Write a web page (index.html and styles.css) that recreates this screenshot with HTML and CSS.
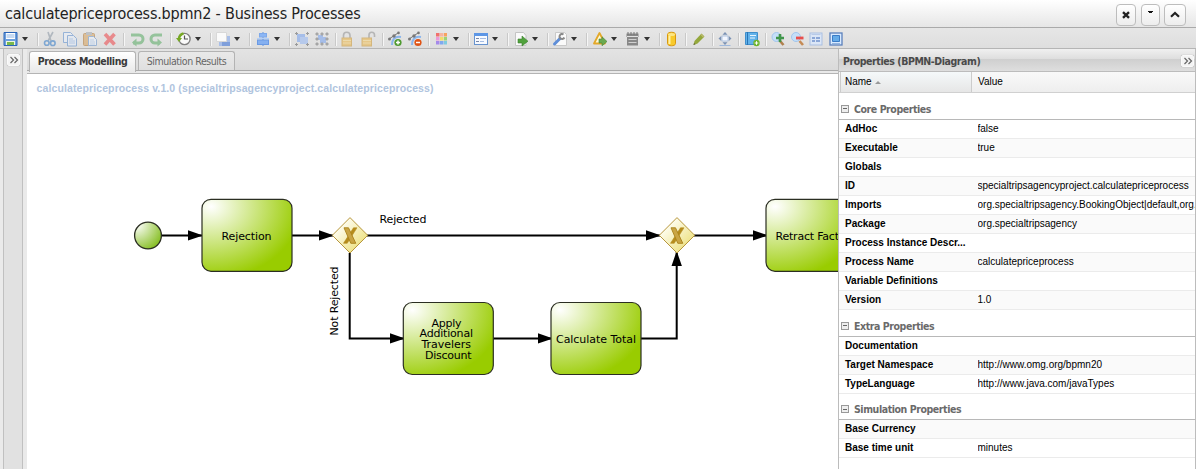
FILE: index.html
```
<!DOCTYPE html>
<html lang="en">
<head>
<meta charset="utf-8">
<title>Business Processes</title>
<link rel="stylesheet" href="styles.css">
</head>
<body>
<header class="titlebar">
  <h1 class="title">calculatepriceprocess.bpmn2 - Business Processes</h1>
  <div class="window-buttons">
    <button class="wbtn wbtn-close"><svg width="18" height="20" viewBox="0 0 18 20"><path d="M6 7.2l6 5.6M12 7.2l-6 5.6" stroke="#222" stroke-width="2.4"/></svg></button>
    <button class="wbtn wbtn-menu"><svg width="17" height="20" viewBox="0 0 17 20"><path d="M6 6h5v1h-1v1H7V7H6z" fill="#111"/></svg></button>
    <button class="wbtn wbtn-up"><svg width="20" height="20" viewBox="0 0 20 20"><path d="M6 11.8l4-3.8 4 3.8" fill="none" stroke="#222" stroke-width="2.2"/></svg></button>
  </div>
</header>

<nav class="toolbar">
  <span class="tool menu"><svg viewBox="0 0 16 16"><path d="M1 1.5h13v13H1z" fill="#6d9fdd" stroke="#2b65b8"/><path d="M3 2h9v6H3z" fill="#fff"/><path d="M3.5 4h8M3.5 6h8" stroke="#8db4e4"/><path d="M3 10h9v4H3z" fill="#eef8dd"/><path d="M4 11h7v3H4z" fill="#79b84b"/></svg></span>
  <i class="sep"></i>
  <span class="tool off"><svg viewBox="0 0 16 16"><path d="M6 1l3 9M11 1L6 10" stroke="#7f8d9c" stroke-width="1.6"/><circle cx="4.8" cy="12" r="2.3" fill="none" stroke="#1f6fc5" stroke-width="1.6"/><circle cx="10.8" cy="12.2" r="2.3" fill="none" stroke="#1f6fc5" stroke-width="1.6"/></svg></span>
  <span class="tool off"><svg viewBox="0 0 16 16"><path d="M1.5 1.5h7l2 2v8h-9z" fill="#e9f1fc" stroke="#4b83cc"/><path d="M5.5 4.500h6l3 3v7.500h-9z" fill="#e3edfb" stroke="#4b83cc"/><path d="M7 8h4M7 10h6M7 12h6" stroke="#88b0e6"/></svg></span>
  <span class="tool off"><svg viewBox="0 0 16 16"><rect x="1.500" y="2.500" width="11" height="12" rx="1" fill="#d69a4c" stroke="#a8691f"/><path d="M4 1h6v3H4z" fill="#9aa0a8"/><path d="M6.500 5.500h5l3 3v6h-8z" fill="#eef4fd" stroke="#5b8ccc"/><path d="M8 9h4M8 11h5M8 13h5" stroke="#9dbfe9"/></svg></span>
  <span class="tool off"><svg viewBox="0 0 16 16"><path d="M3 3l9.500 10.500M12.500 3L3 13.500" stroke="#ee3438" stroke-width="3.600"/></svg></span>
  <i class="sep"></i>
  <span class="tool off"><svg viewBox="0 0 16 16"><path d="M2 4h8a3.700 3.700 0 010 8H4" fill="none" stroke="#4aa557" stroke-width="3"/><path d="M7.500 7.500L3 11.500l4.500 4z" fill="#4aa557"/></svg></span>
  <span class="tool off"><svg viewBox="0 0 16 16"><path d="M13 4H6a3.700 3.700 0 000 8h5" fill="none" stroke="#4aa557" stroke-width="3"/><path d="M8.500 7.500l4.500 4-4.500 4z" fill="#4aa557"/></svg></span>
  <i class="sep"></i>
  <span class="tool menu"><svg viewBox="0 0 16 16"><circle cx="8.500" cy="8" r="5.600" fill="#fafafa" stroke="#808080" stroke-width="1.400"/><path d="M8.500 4.500V8H12" fill="none" stroke="#555" stroke-width="1.200"/><path d="M7.500 2.500a6 6 0 00-4.500 5" fill="none" stroke="#77a825" stroke-width="2.400"/><path d="M0 7h6l-3 4z" fill="#77a825"/></svg></span>
  <i class="sep"></i>
  <span class="tool menu"><svg viewBox="0 0 16 16"><path d="M4 5h11v10H4z" fill="#a9bfe8"/><path d="M7 11h8v4H7z" fill="#7f9fdb"/><path d="M1.500 1.500h10v9h-10z" fill="#fafafa" stroke="#d8d8d8"/></svg></span>
  <i class="sep"></i>
  <span class="tool menu"><svg viewBox="0 0 16 16"><path d="M8 1v14" stroke="#5c90dc"/><rect x="4.500" y="2.500" width="7" height="3.500" fill="#8bb6f5" stroke="#7ea9ea"/><rect x="2.500" y="9" width="11" height="4.500" fill="#85b0f0" stroke="#6b9ae4"/><path d="M2 7.500h12" stroke="#b5d0f6"/></svg></span>
  <i class="sep"></i>
  <span class="tool off"><svg viewBox="0 0 16 16"><path d="M3 3h8v8H3z" fill="#6a9af0"/><path d="M6 6h8v7H6z" fill="#8db3f6"/><path d="M1 2.500h3M2.500 1v3M12 2.500h3M13.500 1v3M1 13.500h3M2.500 12v3M12 13.500h3M13.500 12v3" stroke="#555"/></svg></span>
  <span class="tool off"><svg viewBox="0 0 16 16"><path d="M4 4h5v2h3v6H6v-3H4z" fill="#6a9af0"/><g fill="#777" stroke="#555" stroke-width=".5"><circle cx="3" cy="3" r="1.300"/><circle cx="8" cy="3" r="1.300"/><circle cx="13" cy="3" r="1.300"/><circle cx="3" cy="8" r="1.300"/><circle cx="13" cy="8" r="1.300"/><circle cx="3" cy="13" r="1.300"/><circle cx="8" cy="13" r="1.300"/><circle cx="13" cy="13" r="1.300"/></g></svg></span>
  <i class="sep"></i>
  <span class="tool off"><svg viewBox="0 0 16 16"><path d="M2.500 8V4.500a3 3 0 016.500 0V8" fill="none" stroke="#888" stroke-width="1.600"/><rect x="1" y="7" width="9.500" height="8" fill="#edb034" stroke="#c98e1c"/><path d="M2 9.500h8M2 12h8" stroke="#f8d478"/></svg></span>
  <span class="tool off"><svg viewBox="0 0 16 16"><path d="M8 8V4a2.700 2.700 0 015.500 0v2" fill="none" stroke="#888" stroke-width="1.600"/><rect x="1" y="7" width="9.500" height="8" fill="#edb034" stroke="#c98e1c"/><path d="M2 9.500h8M2 12h8" stroke="#f8d478"/></svg></span>
  <i class="sep"></i>
  <span class="tool"><svg viewBox="0 0 16 16"><path d="M2 8L11 2" stroke="#777"/><path d="M5 14c0-5 2-9 9-8" fill="none" stroke="#8bb5ec" stroke-width="2"/><g fill="#777"><circle cx="2.500" cy="8" r="1.500"/><circle cx="7" cy="5" r="1.700"/><circle cx="11.500" cy="1.900" r="1.300"/></g><circle cx="11" cy="11.500" r="3.600" fill="#4f9a31"/><path d="M11 9.500v4M9 11.500h4" stroke="#fff" stroke-width="1.500"/></svg></span>
  <span class="tool"><svg viewBox="0 0 16 16"><path d="M2 8L11 2" stroke="#777"/><path d="M5 14c0-5 2-9 9-8" fill="none" stroke="#8bb5ec" stroke-width="2"/><g fill="#777"><circle cx="2.500" cy="8" r="1.500"/><circle cx="7" cy="5" r="1.700"/><circle cx="11.500" cy="1.900" r="1.300"/></g><circle cx="11" cy="11.500" r="3.600" fill="#df5315"/><path d="M9 11.500h4" stroke="#fff" stroke-width="1.500"/></svg></span>
  <i class="sep"></i>
  <span class="tool menu"><svg viewBox="0 0 16 16"><path d="M2 2h3.500v3.500H2z" fill="#f1716d"/><path d="M6 2h3.500v3.500H6z" fill="#f6b5a0"/><path d="M10 2h3v3.500h-3z" fill="#f7a25f"/><path d="M2 6h3.500v3.500H2z" fill="#eb9ad8"/><path d="M6 6h3.500v3.500H6z" fill="#f0dc6a"/><path d="M10 6h3v3.500h-3z" fill="#9bd477"/><path d="M2 10h3.500v3.500H2z" fill="#a58aea"/><path d="M6 10h3.500v3.500H6z" fill="#7fa9f0"/><path d="M10 10h3v3.500h-3z" fill="#7fcbe0"/></svg></span>
  <i class="sep"></i>
  <span class="tool menu"><svg viewBox="0 0 16 16"><rect x="1.500" y="2.500" width="13" height="11" fill="#f7faff" stroke="#6793cf"/><path d="M1 2h14v3H1z" fill="#5c96e6"/><path d="M3 7.500h3M3 10.500h3" stroke="#7887a8"/><path d="M7 7.500h6M7 10.500h4" stroke="#a6bde3"/></svg></span>
  <i class="sep"></i>
  <span class="tool menu"><svg viewBox="0 0 16 16"><path d="M2.500 1.500h8l2.500 3v10H2.500z" fill="#fafafa" stroke="#c4c4c4"/><path d="M5 8h4V5l6 5.200-6 4.800v-3H5z" fill="#51a23d" stroke="#3d8130" stroke-width=".6"/></svg></span>
  <i class="sep"></i>
  <span class="tool menu"><svg viewBox="0 0 16 16"><path d="M3.500 1.500h9l2 2v11h-11z" fill="#fafafa" stroke="#c9c9c9"/><path d="M2.500 13L8 7.500" stroke="#5f8ed8" stroke-width="3" stroke-linecap="round"/><path d="M11.500 3.500a2.500 2.500 0 10.800 3" fill="none" stroke="#888" stroke-width="2"/></svg></span>
  <i class="sep"></i>
  <span class="tool menu"><svg viewBox="0 0 16 16"><path d="M7.500 2L13 12.500H2z" fill="#fff8d5" stroke="#e3a829" stroke-width="1.800" stroke-linejoin="round"/><path d="M7 8h3V5.800l5 4.700-5 4.300V12H7z" fill="#6aaa50" stroke="#498535" stroke-width=".6"/></svg></span>
  <span class="tool menu"><svg viewBox="0 0 16 16"><path d="M1.500 2.500h12v3.500h-12zM2 6h11v8.500H2z" fill="#888"/><path d="M3 1v3M6 1v3M9 1v3M12 1v3" stroke="#777"/><path d="M2 5.500h11" stroke="#e2e2e2"/><path d="M3.500 8.500h8M3.500 11.500h8" stroke="#d0d0d0"/></svg></span>
  <i class="sep"></i>
  <span class="tool"><svg viewBox="0 0 16 16"><path d="M3.500 3.500c0-3 8-3 8 0v9c0 3-8 3-8 0z" fill="#f8ca2c" stroke="#d9980f"/><path d="M5.500 5v8" stroke="#fff0a5" stroke-width="2"/><ellipse cx="7.500" cy="3.500" rx="3.500" ry="1.500" fill="#fde684"/></svg></span>
  <i class="sep"></i>
  <span class="tool"><svg viewBox="0 0 16 16"><path d="M2.500 14l1-4L10.500 2.500 13.500 5.500 6.500 12.500z" fill="#94a83c"/><path d="M10 3.500L12.500 6" stroke="#bcb96e" stroke-width="1.500"/><path d="M2.500 14l.5-2 1.500 1.300z" fill="#5f6338"/></svg></span>
  <i class="sep"></i>
  <span class="tool"><svg viewBox="0 0 16 16"><rect x="5" y="5" width="6" height="5" fill="#f3f7ff" stroke="#b0c4e0"/><path d="M8 1l2.500 2.700h-5zM8 14l2.500-2.700h-5zM1.500 7.500l2.700-2.500v5zM14.500 7.500L11.800 5v5z" fill="#7b92b5"/><path d="M2.500 14.500h11" stroke="#9fb9dd"/></svg></span>
  <i class="sep"></i>
  <span class="tool"><svg viewBox="0 0 16 16"><path d="M1.500 1.500h12v12h-12z" fill="#62b2ea" stroke="#3f8ecb"/><path d="M3.500 1v13" stroke="#2874b5"/><path d="M6 4.500h6M6 7h5" stroke="#e6f5ff"/><circle cx="12.500" cy="12" r="3.200" fill="#6fb52d"/><path d="M12.500 10.200v3.600M10.700 12h3.600" stroke="#fff"/></svg></span>
  <i class="sep"></i>
  <span class="tool"><svg viewBox="0 0 16 16"><path d="M9 10l3.500 4" stroke="#b0804e" stroke-width="2.600"/><circle cx="5.500" cy="6" r="4.500" fill="#c5dff8" stroke="#a3c5ec"/><path d="M9 3v8M5 7h8" stroke="#41964a" stroke-width="2.600"/></svg></span>
  <span class="tool"><svg viewBox="0 0 16 16"><path d="M8.500 10l3.500 4" stroke="#c58b55" stroke-width="2.600"/><circle cx="5" cy="6" r="4.500" fill="#c5dff8" stroke="#a3c5ec"/><path d="M5 7h7.500" stroke="#e84f4c" stroke-width="2.800"/></svg></span>
  <span class="tool"><svg class="nudge" viewBox="0 0 16 16"><rect x="2" y="2" width="12" height="12" fill="#dbe6f6" stroke="#a9bfe2"/><path d="M3.500 3.500h9" stroke="#b8cae8"/><path d="M4 6h3v2H4zM8 6h4v2H8zM4 9h3v2H4zM8 9h4v2H8z" fill="#8ba7d7"/></svg></span>
  <span class="tool"><svg class="nudge" viewBox="0 0 16 16"><rect x="2" y="2" width="12" height="12" fill="#d9eaff" stroke="#5b80bc" stroke-width="1.300"/><path d="M4.500 4.500h7v6h-7z" fill="#65abe8" stroke="#3b7cc6"/><path d="M4 12.500h8" stroke="#92b5e0"/></svg></span>
</nav>

<main class="workspace">
  <aside class="rail">
    <button class="collapse"><svg width="12" height="12" viewBox="0 0 12 12"><path d="M2.500 3l3 3-3 3M6.500 3l3 3-3 3" fill="none" stroke="#666" stroke-width="1.200"/></svg></button>
  </aside>
  <section class="editor">
    <div class="tabs">
      <span class="tab tab-active">Process Modelling</span>
      <span class="tab">Simulation Results</span>
    </div>
    <div class="canvas">
      <svg class="diagram" width="811" height="395" viewBox="27 74 811 395">
        <defs>
          <radialGradient id="task" cx="10%" cy="10%" r="100%" fx="10%" fy="10%"><stop offset="0" stop-color="#fff"/><stop offset="1" stop-color="#9c0"/></radialGradient>
          <radialGradient id="start" cx="10%" cy="10%" r="100%" fx="10%" fy="10%"><stop offset="0" stop-color="#fff"/><stop offset="1" stop-color="#8bc12c"/></radialGradient>
          <linearGradient id="gate" x1="0" y1="0" x2="1" y2="1"><stop offset=".2" stop-color="#fffef4"/><stop offset=".85" stop-color="#ece07d"/></linearGradient>
          <marker id="arrow" markerUnits="userSpaceOnUse" markerWidth="15" markerHeight="11" refX="14" refY="5.500" orient="auto"><path d="M0 .3L15 5.500 0 10.700z"/></marker>
          <g id="xgate">
            <path d="M0-17.700L17.700 0 0 17.700-17.700 0z" fill="url(#gate)" stroke="#b7963c"/>
            <path d="M3.500-7.500H7L-2.800 8H-6.500z" fill="#b58c1c" stroke="#b58c1c" stroke-width=".6"/>
            <path d="M-6-7.500h4.500L5.800 8H.8z" fill="#c9a544" stroke="#a98119" stroke-width=".9"/>
          </g>
          <rect id="box" width="90" height="72" rx="9" fill="url(#task)" stroke="#2b2e22" stroke-width="1.200"/>
        </defs>
        <text class="caption" x="36.500" y="92" textLength="397">calculatepriceprocess v.1.0 (specialtripsagencyproject.calculatepriceprocess)</text>
        <g class="flow">
          <path d="M162 235.400H202"/><path d="M292 235.400H333"/><path d="M367 235.400H660"/>
          <path d="M349.700 253V338.400H404"/><path d="M493 338.400H552"/>
          <path d="M641 338.400H676.700V252"/><path d="M694 235.400H767"/>
        </g>
        <circle cx="148" cy="235.500" r="13.400" fill="url(#start)" stroke="#2b2e22" stroke-width="1.300"/>
        <use href="#box" x="202" y="199.300"/><use href="#box" x="403.300" y="302.500"/>
        <use href="#box" x="551" y="302.500"/><use href="#box" x="766" y="199.300"/>
        <use href="#xgate" x="350" y="235.300"/><use href="#xgate" x="677" y="235.300"/>
        <g class="label">
          <text x="221.500" y="240" textLength="50">Rejection</text>
          <text x="379.500" y="223" textLength="47">Rejected</text>
          <text transform="translate(337.500 335.500) rotate(-90)" textLength="69">Not Rejected</text>
          <text x="431.500" y="327" textLength="30">Apply</text>
          <text x="419.500" y="337" textLength="53.500">Additional</text>
          <text x="421.500" y="348" textLength="49.500">Travelers</text>
          <text x="425" y="359" textLength="46.500">Discount</text>
          <text x="556" y="343" textLength="80">Calculate Total</text>
          <text x="775.500" y="240" textLength="69">Retract Facts</text>
        </g>
      </svg>
    </div>
  </section>
  <aside class="props">
    <div class="props-title"><span class="props-name">Properties (BPMN-Diagram)</span>
      <button class="collapse"><svg width="12" height="12" viewBox="0 0 12 12"><path d="M2.500 3l3 3-3 3M6.500 3l3 3-3 3" fill="none" stroke="#666" stroke-width="1.200"/></svg></button>
    </div>
    <div class="cols"><span class="col-name">Name <i class="sort"></i></span><span class="col-value">Value</span></div>
    <div class="group"><i class="toggle"></i><span>Core Properties</span></div>
    <div class="row"><b>AdHoc</b><span>false</span></div>
    <div class="row alt"><b>Executable</b><span>true</span></div>
    <div class="row"><b>Globals</b><span></span></div>
    <div class="row alt"><b>ID</b><span>specialtripsagencyproject.calculatepriceprocess</span></div>
    <div class="row"><b>Imports</b><span>org.specialtripsagency.BookingObject|default,org.specialtripsagency</span></div>
    <div class="row alt"><b>Package</b><span>org.specialtripsagency</span></div>
    <div class="row"><b>Process Instance Descr...</b><span></span></div>
    <div class="row alt"><b>Process Name</b><span>calculatepriceprocess</span></div>
    <div class="row"><b>Variable Definitions</b><span></span></div>
    <div class="row alt"><b>Version</b><span>1.0</span></div>
    <div class="group"><i class="toggle"></i><span>Extra Properties</span></div>
    <div class="row"><b>Documentation</b><span></span></div>
    <div class="row alt"><b>Target Namespace</b><span>http://www.omg.org/bpmn20</span></div>
    <div class="row"><b>TypeLanguage</b><span>http://www.java.com/javaTypes</span></div>
    <div class="group group-short"><i class="toggle"></i><span>Simulation Properties</span></div>
    <div class="row alt"><b>Base Currency</b><span></span></div>
    <div class="row"><b>Base time unit</b><span>minutes</span></div>
  </aside>
</main>
</body>
</html>
```
FILE: styles.css
```
* { box-sizing: border-box; }
body {
  margin: 0;
  width: 1196px;
  height: 469px;
  overflow: hidden;
  display: flex;
  flex-direction: column;
  background: #eaeaea;
  font-family: "Liberation Sans", Arial, sans-serif;
  font-size: 11px;
}
button { padding: 0; font: inherit; }
svg { display: block; }

.titlebar {
  height: 28px;
  flex: none;
  display: flex;
  justify-content: space-between;
  padding: 0 10px 0 5px;
  background: linear-gradient(#fff, #e6e6e6);
  border-bottom: 1px solid #aaa;
}
.title {
  margin: 0;
  font: 400 16px/28px "DejaVu Sans Condensed", "DejaVu Sans", sans-serif;
  font-stretch: condensed;
  letter-spacing: -0.19px;
  color: #222;
  white-space: nowrap;
}
.window-buttons { display: flex; padding-top: 4px; }
.wbtn {
  height: 22px;
  border: 1px solid #bdbdbd;
  border-radius: 4px;
  background: linear-gradient(#fff, #ededed);
}
.wbtn-close { width: 20px; }
.wbtn-menu { width: 19px; margin: 0 4px 0 5px; }
.wbtn-up { width: 22px; }

.toolbar {
  height: 21px;
  flex: none;
  display: flex;
  align-items: center;
  padding: 2px 0 0 1px;
  background: linear-gradient(#e6e6e6, #dedede);
  border-bottom: 1px solid #b5b5b5;
}
.tool { width: 20px; height: 16px; padding-left: 2px; flex: none; }
.tool svg { width: 16px; height: 16px; }
.tool .nudge { margin-left: -3px; }
.off svg { opacity: .5; }
.menu { width: 32.9px; display: flex; align-items: center; }
.menu::after {
  content: "";
  margin-left: 3px;
  border: 3px solid transparent;
  border-top: 4px solid #333;
  border-bottom: 0;
}
.sep { width: 1px; height: 13px; flex: none; margin: 0 2.6px 0 3px; background: #c9c9c9; box-shadow: 1px 0 #f6f6f6; }

.workspace { flex: 1; display: flex; min-height: 0; }
.rail {
  width: 20px;
  flex: none;
  margin: 0 4px 0 3px;
  padding: 5px 0 0 3px;
  background: #e1e1e1;
  border: solid #c0c0c0;
  border-width: 0 1px;
}
.collapse {
  display: grid;
  place-content: center;
  width: 13px;
  height: 12px;
  border: 1px solid #fafafa;
  border-radius: 2px;
  background: #f4f4f4;
  box-shadow: 0 0 1px #999;
}
.editor { flex: 1; min-width: 0; display: flex; flex-direction: column; }
.tabs {
  height: 25px;
  flex: none;
  display: flex;
  align-items: flex-start;
  gap: 2px;
  padding: 2px 0 0 2px;
  background: linear-gradient(#e3e3e3 0 1px, #dadada 21px, #ababab 21px 22px, #e9e9e9 22px 24px, #b4b4b4 24px);
}
.tab {
  width: 97px;
  height: 19px;
  border: 1px solid #b3b3b3;
  border-bottom: 0;
  border-radius: 3px 3px 0 0;
  background: linear-gradient(#e9e9e9, #dfdfdf);
  font: 10.5px/18px "DejaVu Sans Condensed", "DejaVu Sans", sans-serif;
  font-stretch: condensed;
  letter-spacing: -0.43px;
  text-align: center;
  color: #666;
  white-space: nowrap;
}
.tab-active { width: 107px; height: 21px; background: linear-gradient(#fff, #e9e9e9); color: #3a3a3a; font-weight: 700; }
.canvas { flex: 1; min-height: 0; background: #fff; }
.flow path { fill: none; stroke: #000; stroke-width: 2; marker-end: url(#arrow); }
.label { font: 11px "DejaVu Sans", sans-serif; }
.caption { font: bold 10.5px "Liberation Sans", Arial, sans-serif; fill: #b0c4de; }

.props {
  width: 358px;
  flex: none;
  overflow: hidden;
  background: #fff;
  border: solid #bcbcbc;
  border-width: 0 1px;
}
.props-title, .group {
  font: bold 10.5px/20px "DejaVu Sans Condensed", "DejaVu Sans", sans-serif;
  font-stretch: condensed;
  letter-spacing: -0.43px;
}
.props-title {
  height: 23px;
  display: flex;
  justify-content: space-between;
  align-items: center;
  padding: 1px 1px 0 4px;
  color: #4a4a4a;
  background: linear-gradient(#f0f0f0, #dedede 45%, #cfcfcf 46%, #dedede);
  border-bottom: 1px solid #bcbcbc;
}
.cols {
  height: 21px;
  display: flex;
  line-height: 20px;
  padding-left: 1px;
  background: linear-gradient(#f9f9f9, #eee);
  border-bottom: 1px solid #d0d0d0;
}
.col-name { width: 132px; padding-left: 4px; background: linear-gradient(#f5f9fa, #e6e6e6); border: solid #ccc; border-width: 0 1px; font-size: 10px; }
.col-value { padding-left: 6px; font-size: 10px; }
.sort { display: inline-block; margin: 0 0 1px 1px; border: 3px solid transparent; border-bottom-color: #999; border-top: 0; }
.group {
  height: 27px;
  display: flex;
  align-items: center;
  gap: 5px;
  padding: 5px 0 0 2px;
  color: #6a6a6a;
  border-bottom: 1px solid #b8b8b8;
}
.group-short { height: 26px; }
.toggle {
  width: 8px;
  height: 8px;
  border: 1px solid #999;
  background: linear-gradient(#666, #666) center / 4px 1px no-repeat, #eee;
}
.row {
  height: 19px;
  display: grid;
  grid-template-columns: 132.500px 1fr;
  padding-left: 6px;
  font-size: 10px;
  line-height: 17px;
  white-space: nowrap;
  border-bottom: 1px solid #ebebeb;
}
.row span { overflow: hidden; }
.alt { background: #fafafa; }
```
